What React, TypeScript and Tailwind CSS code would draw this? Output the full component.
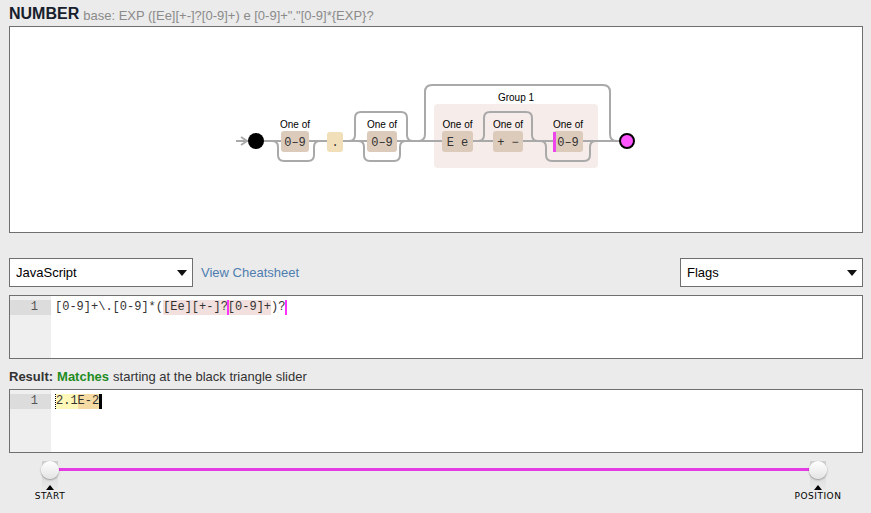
import React from 'react';

const mono = { fontFamily: '"Liberation Mono", "Courier New", monospace' };
const sans = 'Liberation Sans, Arial, sans-serif';

const Box = ({ x, w, label, fill = '#dccbbb' }: { x: number; w: number; label: string; fill?: string }) => (
  <g>
    <text x={x + w / 2} y={128} fontSize="10" textAnchor="middle" fill="#000" fontFamily={sans}>One of</text>
    <rect x={x} y={131} width={w} height={21} rx={3} fill={fill} />
    <text x={x + w / 2} y={145.5} fontSize="12" textAnchor="middle" fill="#333" style={mono}>{label}</text>
  </g>
);

const Diagram = () => (
  <svg width="852" height="205" viewBox="10 27 852 205" className="block">
    <g fill="none" stroke="#a9a9a9" strokeWidth="2">
      <path d="M236 141 H627" />
      {/* loop under first 0-9 */}
      <path d="M272 141 q6 0 6 6 v8 q0 6 6 6 h24 q6 0 6 -6 v-8 q0 -6 6 -6" />
      {/* skip over second 0-9 */}
      <path d="M349 141 q6 0 6 -6 v-17 q0 -6 6 -6 h40 q6 0 6 6 v17 q0 6 6 6" />
      {/* loop under second 0-9 */}
      <path d="M358 141 q6 0 6 6 v8 q0 6 6 6 h24 q6 0 6 -6 v-8 q0 -6 6 -6" />
      {/* skip over group */}
      <path d="M418 141 q7 0 7 -7 v-42 q0 -7 7 -7 h171 q7 0 7 7 v42 q0 7 7 7" />
    </g>
    <path d="M241 137 L247 141 L241 145" fill="none" stroke="#a9a9a9" strokeWidth="2" />
    <rect x={434} y={104} width={164} height={64} rx={4} fill="#f6ece9" />
    <text x={516} y={101} fontSize="10" textAnchor="middle" fill="#000" fontFamily={sans}>Group 1</text>
    <g fill="none" stroke="#a9a9a9" strokeWidth="2">
      <path d="M434 141 H598" />
      {/* loop under last 0-9 */}
      <path d="M540 141 q6 0 6 6 v8 q0 6 6 6 h32 q6 0 6 -6 v-8 q0 -6 6 -6" />
      {/* skip over +- */}
      <path d="M478 141 q6 0 6 -6 v-17 q0 -6 6 -6 h36 q6 0 6 6 v17 q0 6 6 6" />
    </g>
    <circle cx={256} cy={141} r={8} fill="#000" />
    <Box x={281} w={28} label="0–9" />
    <rect x={327} y={132} width={16} height={20} rx={3} fill="#f0dfb9" />
    <text x={335} y={146} fontSize="12" textAnchor="middle" fill="#333" style={mono}>.</text>
    <Box x={367} w={30} label="0–9" />
    <Box x={442} w={31} label="E e" />
    <Box x={493} w={30} label="+ −" />
    <Box x={553} w={30} label="0–9" />
    <rect x={553} y={132} width={3} height={20} fill="#ee44ee" />
    <circle cx={627} cy={141} r={7} fill="#ff55ff" stroke="#000" strokeWidth="2" />
  </svg>
);

const Caret = () => (
  <svg width="10" height="6" viewBox="0 0 10 6"><path d="M0 0 H10 L5 6 Z" fill="#111" /></svg>
);

const Thumb = ({ label }: { label: string }) => (
  <div className="flex flex-col items-center w-[60px]">
    <div className="w-[16px] h-[30px] rounded-b-[3px] bg-gradient-to-b from-[#cfcfcf] to-[#ebebeb] flex flex-col items-center relative">
      <div className="absolute top-0 w-[18px] h-[18px] rounded-full bg-gradient-to-b from-white to-[#e4e4e4] shadow-[0_1px_2px_rgba(0,0,0,0.35)]" />
      <div className="mt-[24px] w-0 h-0 border-l-[4px] border-r-[4px] border-b-[5px] border-l-transparent border-r-transparent border-b-black" />
    </div>
    <div className="text-[9px] leading-[10px] text-black tracking-[0.5px]" style={{ fontFamily: '"DejaVu Sans", Arial, sans-serif' }}>{label}</div>
  </div>
);

const Gutter = () => (
  <div className="w-[41px] h-full bg-[#efefef] pt-[4px] shrink-0">
    <div className="h-[15px] bg-[#dcdcdc] text-right pr-[13px] text-[12px] leading-[15px] text-[#555]" style={mono}>1</div>
  </div>
);

export default function App() {
  return (
    <div className="w-[871px] h-[513px] bg-[#ebebeb] px-[9px] overflow-hidden" style={{ fontFamily: '"Liberation Sans", Arial, sans-serif' }}>
      <div className="h-[26px] flex items-end pb-[4px] gap-[4px]">
        <span className="text-[16px] font-bold text-[#17202c] leading-none">NUMBER</span>
        <span className="text-[13px] text-[#8a8a8a] leading-none">base: EXP ([Ee][+-]?[0-9]+) e [0-9]+"."[0-9]*{'{EXP}'}?</span>
      </div>
      <div className="w-[854px] h-[207px] bg-white border border-[#6f6f6f]">
        <Diagram />
      </div>
      <div className="mt-[25px] flex items-center justify-between w-[854px]">
        <div className="flex items-center gap-[8px]">
          <div className="w-[184px] h-[29px] bg-white border border-[#6f6f6f] flex items-center justify-between pl-[6px] pr-[5px] text-[13px] text-black">
            <span>JavaScript</span>
            <Caret />
          </div>
          <span className="text-[13px] text-[#4f7db0]">View Cheatsheet</span>
        </div>
        <div className="w-[183px] h-[29px] bg-white border border-[#6f6f6f] flex items-center justify-between pl-[6px] pr-[5px] text-[13px] text-black">
          <span>Flags</span>
          <Caret />
        </div>
      </div>
      <div className="mt-[8px] w-[854px] h-[64px] bg-white border border-[#6f6f6f] flex items-start">
        <Gutter />
        <div className="ml-[4px] mt-[4px] h-[15px] text-[12px] leading-[15px] text-[#333] whitespace-pre flex" style={mono}>
          <span>[0-9]+\.[0-9]*(</span>
          <span className="bg-[#f2e0de]">[Ee][+-]?</span>
          <span className="w-[2px] bg-[#ff33ff] -mx-[1px] relative z-10" />
          <span className="bg-[#f2e0de]">[0-9]+</span>
          <span>)?</span>
          <span className="w-[2px] bg-[#ff33ff]" />
        </div>
      </div>
      <div className="h-[30px] flex items-center pt-[5px] text-[13px] text-[#333]">
        <span className="font-bold">Result:</span>
        <span className="font-bold text-[#1f8c1f] ml-[4px]">Matches</span>
        <span className="ml-[4px]">starting at the black triangle slider</span>
      </div>
      <div className="w-[854px] h-[64px] bg-white border border-[#6f6f6f] flex items-start">
        <Gutter />
        <div className="ml-[4px] mt-[4px] h-[15px] text-[12px] leading-[15px] text-[#333] whitespace-pre flex border-l border-dotted border-black" style={mono}>
          <span className="bg-[#fff8b8]">2.1</span>
          <span className="bg-[#f5dba3]">E-2</span>
          <span className="w-[3px] bg-black" />
        </div>
      </div>
      <div className="relative mt-[8px] h-[52px] w-[854px]">
        <div className="absolute left-[41px] right-[44px] top-[7px] h-[3px] bg-[#e43ce4]" />
        <div className="absolute left-[11px] top-0"><Thumb label="START" /></div>
        <div className="absolute left-[779px] top-0"><Thumb label="POSITION" /></div>
      </div>
    </div>
  );
}
